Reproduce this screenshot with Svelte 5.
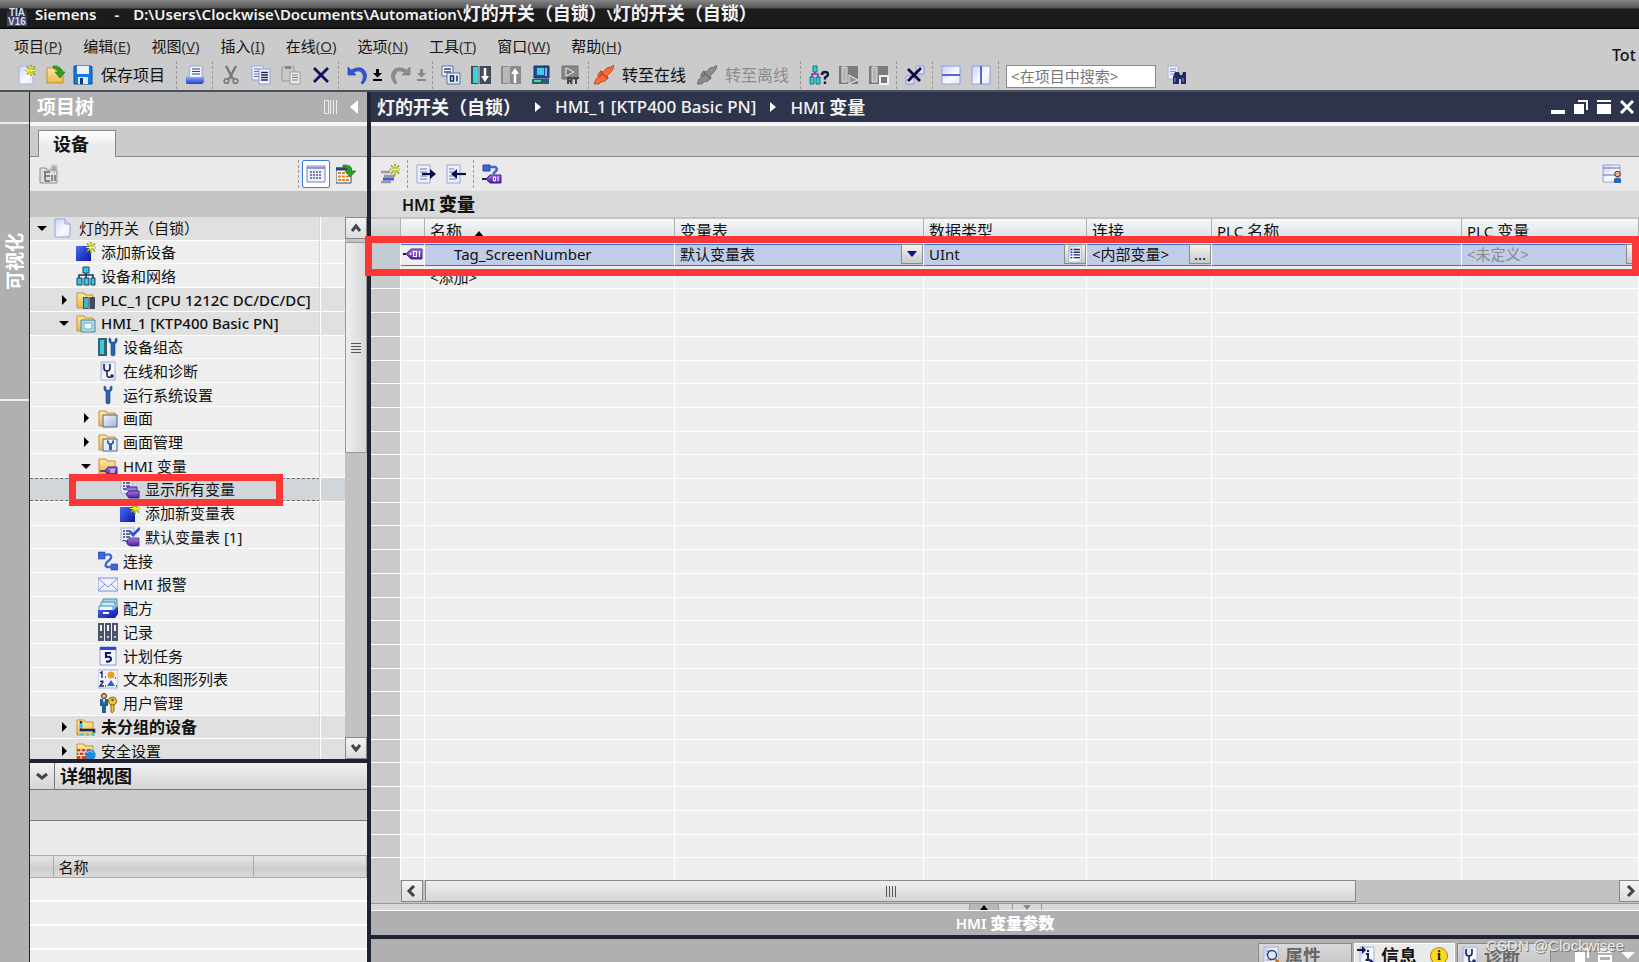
<script lang="ts">
  type TreeItem = {
    label: string;
    level: number;
    icon: string;
    arrow?: 'open' | 'closed';
    group?: boolean;
    weight?: 'semi' | 'bold';
    selected?: boolean;
  };

  const menus = [
    ['项目', 'P'],
    ['编辑', 'E'],
    ['视图', 'V'],
    ['插入', 'I'],
    ['在线', 'O'],
    ['选项', 'N'],
    ['工具', 'T'],
    ['窗口', 'W'],
    ['帮助', 'H'],
  ];

  const folder = '<path d="M1 3h7l1 2h8v13H1z" fill="url(#g-folder)" stroke="#c09030"/>';
  const page = '<path d="M3 1h14v18H3z" fill="url(#g-page)" stroke="#a9b1d8"/>';
  const spark = '<path d="M15 0v11M9.500 5.500h11M11 1.500l8 8M19 1.500l-8 8" stroke="#7a8a20" stroke-width="1.600"/><path d="M15 1v9M10.500 5.500h9M12 2.500l6 6M18 2.500l-6 6" stroke="#ffff30" stroke-width="1"/>';
  const tagShape = '<path d="M7 12l3-2h9v8h-9l-3-2z" fill="url(#g-tag)" stroke="#3a1a80" stroke-width=".7"/>';
  const wrench = '<path d="M6 1v4l2 2v11q2 2 4 0V7l2-2V1l-2 1v3H8V2z" fill="#2d63b0" stroke="#1d4584" stroke-width=".6"/>';
  const stetho = '<path d="M6 3v4q0 3 3 3t3-3V3M9 10v4q0 3 4 2" fill="none" stroke="#1c2550" stroke-width="1.600"/><circle cx="14" cy="15" r="1.700" fill="#1c2550"/>';
  const plug = (fill: string, line: string) =>
    `<path d="M0 19l2-5 2-1 0-4 3-3 2 1 4-4 4-1 3-2-1 4-2 3-4 4 1 2-3 3-4 1-2 2z" fill="${fill}" stroke="${line}" stroke-width=".8"/><path d="M6 6l8 8M5 12l3-3" stroke="${line}" stroke-width="1.400"/>`;

  const icons: Record<string, string> = {
    newProject: page + spark,
    openProject: folder + '<path d="M7 1q8-1 9 6h3l-5 6-5-6h3q-1-4-5-4z" fill="#2aa02a" stroke="#107010" stroke-width=".6"/>',
    save: '<path d="M1 1h17l1 1v17H1z" fill="#1478e0" stroke="#0b4a9a"/><path d="M4 1h12v8H4z" fill="#e8f2ff"/><path d="M5 12h10v7H5z" fill="#dfe8f4"/><path d="M7 13h3v6H7z" fill="#123a78"/>',
    print: '<path d="M5 1h12v12H4z" fill="#f2f5ff" stroke="#a0a8d0"/><path d="M7 4h8M7 6.500h8M7 9h8" stroke="#334070"/><path d="M1 12h18v5l-2 2H2l-1-1z" fill="url(#g-blue)"/>',
    cut: '<path d="M5 1l7 13M15 1L8 14" stroke="#777" stroke-width="2.400"/><circle cx="5.500" cy="16" r="2.300" fill="none" stroke="#777" stroke-width="1.600"/><circle cx="14.500" cy="16" r="2.300" fill="none" stroke="#777" stroke-width="1.600"/>',
    copy: '<path d="M1 1h11v14H1z" fill="#eef1ff" stroke="#99a2dc"/><path d="M3 4h6M3 6.500h6M3 9h6M3 11.500h6" stroke="#6070b0"/><path d="M8 4h11v15H8z" fill="#f4f6ff" stroke="#8c96d6"/><path d="M10 7.500h7M10 10h7M10 12.500h7M10 15h7" stroke="#20285c" stroke-width="1.300"/>',
    paste: '<path d="M1 2h12v14H1z" fill="#c9c9c9" stroke="#999"/><path d="M4 1h6v3H4z" fill="#888"/><path d="M9 7h10v12H9z" fill="#ececec" stroke="#999"/><path d="M11 10h6M11 12.500h6M11 15h6" stroke="#777"/>',
    remove: '<path d="M3 3l14 14M17 3L3 17" stroke="#101060" stroke-width="2.800"/>',
    undo: '<path d="M1 2v8h8L6.500 7.500Q12 4 15 8t-1 10l2 1q6-7 2-13T4 5z" fill="#3058d8" stroke="#2038a0" stroke-width=".6"/>',
    redo: '<path d="M19 2v8h-8l2.500-2.500Q8 4 5 8t1 10l-2 1q-6-7-2-13t14-1z" fill="#8e8e8e" stroke="#777" stroke-width=".6"/>',
    compile: '<path d="M1 1h11v10H1z" fill="#f2f5ff" stroke="#5f6fb0"/><path d="M3 4h7M3 7h7" stroke="#2c4070" stroke-width="1.500"/><path d="M6 8h13v11H6z" fill="#e4f0fa" stroke="#4a78a8"/><path d="M9.500 11h3v5h-3zM16 10.500v6" fill="none" stroke="#182858" stroke-width="1.500"/>',
    download: '<path d="M0 1h20v18H0z" fill="#3f4a5c"/><path d="M2 2h5v16H2z" fill="#2fd6dc"/><path d="M8 1v18" stroke="#e0e8f0"/><path d="M14 3v10" stroke="#fff" stroke-width="2.500"/><path d="M10 11h8l-4 6z" fill="#fff"/>',
    upload: '<path d="M0 1h20v18H0z" fill="#8a8a8a"/><path d="M2 2h5v16H2z" fill="#b8b8b8"/><path d="M8 1v18" stroke="#ddd"/><path d="M14 8v10" stroke="#fff" stroke-width="2.500"/><path d="M10 9h8l-4-6z" fill="#fff"/>',
    simulate: '<path d="M3 1h15v12H3z" fill="#1d4c9c" stroke="#12305f"/><path d="M6 3h7v7H6z" fill="#48c8e8"/><path d="M14 3h2v8h-2z" fill="#8fb0dc"/><path d="M1 14h17v5H1z" fill="#2b5a80"/><path d="M3 16h7" stroke="#50e070" stroke-width="2"/>',
    runtime: '<path d="M1 1h16v13H1z" fill="#888" stroke="#6e6e6e"/><path d="M5 3l8 4-8 4z" fill="#777" stroke="#eee"/><path d="M7 19v-6h3.500v3H7M9 16l2 3M12 13h6M15 13v6" fill="none" stroke="#444" stroke-width="2"/>',
    online: plug('#f4703a', '#c43a10'),
    offline: plug('#8c8c8c', '#666'),
    accessible: '<path d="M4 1h4v6H4zM1 12h4v7H1zM7 12h4v7H7z" fill="#25d0d0" stroke="#187878"/><path d="M6 7v2M3 12V9h6v3" fill="none" stroke="#8830c0" stroke-width="1.600"/><path d="M13 10q0-3 3-3t3 2.500q0 1.500-3 3v2M16 16.500v2.500" fill="none" stroke="#101848" stroke-width="2.400"/>',
    startCpu: '<path d="M0 1h19v18H0z" fill="#7b7b7b"/><path d="M3 2h5v15H3z" fill="#b4b4b4" stroke="#ddd"/><path d="M10 10l9 5-9 4z" fill="#999" stroke="#eee"/>',
    stopCpu: '<path d="M0 1h19v18H0z" fill="#7b7b7b"/><path d="M3 2h5v15H3z" fill="#b4b4b4" stroke="#ddd"/><path d="M11 11h8v8h-8z" fill="#777" stroke="#f2f2f2" stroke-width="2"/>',
    crossRef: '<path d="M11 1h8v8h-8zM1 11h8v8H1z" fill="#dde3ff" stroke="#8a94d4"/><path d="M3 4l12 12M16 3L3 16" stroke="#08083c" stroke-width="2.800"/>',
    splitH: '<path d="M1 1h18v18H1z" fill="url(#g-page)" stroke="#8f9ce0"/><path d="M1 10h18" stroke="#5466d8" stroke-width="2"/>',
    splitV: '<path d="M1 1h18v18H1z" fill="url(#g-page)" stroke="#8f9ce0"/><path d="M10 1v18" stroke="#5466d8" stroke-width="2"/>',
    find: '<path d="M1 1h10v13H1z" fill="#eef1ff" stroke="#a3acd8"/><path d="M3 4h6M3 6.500h6M3 9h6" stroke="#8090c0"/><path d="M8 7h4l1 3h2l1-3h3v12h-5v-5h-2v5H6v-7z" fill="#1d2c66"/><path d="M8 13v4M16 13v4" stroke="#7c90d0"/>',
    addFolder: '<path d="M1 4h6l1 2h10v13H1z" fill="#dcdcdc" stroke="#909090"/><path d="M5 8h6M6 8v9M6 12h5M6 17h5M13 11v6M16 11v6" fill="none" stroke="#666" stroke-width="1.400"/><path d="M15 0v8M11 4h8M12 1l6 6M18 1l-6 6" stroke="#999"/>',
    listView: '<path d="M1 2h18v16H1z" fill="#eef1ff" stroke="#7782bc"/><path d="M1 4h18" stroke="#8f99cc" stroke-width="2"/><path d="M4 8h12M4 11h12M4 14h12" stroke="#505a78" stroke-width="1.500" stroke-dasharray="2 1"/>',
    overview: '<path d="M0 4h15v15H0z" fill="#fff" stroke="#26457a"/><path d="M0 5h15" stroke="#26457a" stroke-width="3"/><path d="M2 9h11M2 12.500h11M2 16h11" stroke="#e08020" stroke-width="2" stroke-dasharray="3 1"/><path d="M7 1q9-1 9 6h4l-6 6-5-6h3q-1-4-5-4z" fill="#2aa02a" stroke="#107010" stroke-width=".6"/>',
    newTag: '<path d="M1 8h9M4 12h11M1 18h10" stroke="#9a9a9a" stroke-width="2.500"/><path d="M3 15h11" stroke="#3a60e0" stroke-width="3"/>' + spark,
    exportTags: '<path d="M1 1h13v18H1z" fill="#eef1ff" stroke="#98a2dc"/><path d="M4 5h7M4 8h7M4 12h7M4 15h7" stroke="#6878a0"/><path d="M6 10h9" stroke="#0c1048" stroke-width="2.200"/><path d="M14 5l6 5-6 5z" fill="#0c1048"/>',
    importTags: '<path d="M1 1h13v18H1z" fill="#eef1ff" stroke="#98a2dc"/><path d="M3 5h5M3 8h4M3 12h4M3 15h7" stroke="#6878a0"/><path d="M10 10h10" stroke="#0c1048" stroke-width="2.200"/><path d="M11 5l-6 5 6 5z" fill="#0c1048"/>',
    linkTag: '<path d="M1 1h7v6H1z" fill="#3f67dd" stroke="#2444a0"/><path d="M8 3h5q3 1 1 4l-3 3" fill="none" stroke="#3f67dd" stroke-width="2.500"/><path d="M0 15h8" stroke="#2b1560" stroke-width="2"/><path d="M4 15l4-4h11v8H8z" fill="url(#g-tag)" stroke="#3a1a80"/><path d="M11.500 13h2v4h-2zM16 12.500v5" fill="none" stroke="#fff"/>',
    userView: '<path d="M1 1h17v17H1z" fill="url(#g-page)" stroke="#95a0d0"/><path d="M1 4h17M1 11h17" stroke="#6070a8"/><path d="M12 19v-4q3-3 7 0v4z" fill="#2468b0"/><circle cx="15.500" cy="10" r="2.800" fill="#e8b880" stroke="#40301c"/>',
    project: '<path d="M1 1h10l5 5v13H1z" fill="url(#g-page)" stroke="#98a2dc"/><path d="M11 1v5h5" fill="#cdd6fb" stroke="#98a2dc"/>',
    addDevice: '<path d="M0 4h15v15H0z" fill="url(#g-deep)"/>' + spark,
    network: '<path d="M7 1h6v6H7zM1 12h5v7H1zM8 12h5v7H8zM15 12h4v7h-4z" fill="#34c8d8" stroke="#1b3f68"/><path d="M10 7v5M3 12V9h14v3" fill="none" stroke="#1b3060" stroke-width="1.500"/>',
    plc: folder + '<path d="M7 7h12v12H7z" fill="#414b5a"/><path d="M8 8h4v10H8z" fill="#35b8c8"/><path d="M13 7v12" stroke="#aab4c0"/>',
    hmi: folder + '<path d="M5 7h14v12H5z" fill="#b8d8ea" stroke="#3f86a0"/><path d="M8 10h8v6H8z" fill="#e8f8ff" stroke="#62b6cc"/>',
    config: '<path d="M0 1h9v18H0z" fill="#3e6070"/><path d="M2 3h4v14H2z" fill="#34cfd4"/><g transform="translate(5 0)">' + wrench + '</g>',
    diag: page + stetho,
    settings: wrench,
    screens: folder + '<path d="M5 7h14v12H5z" fill="url(#g-screen)" stroke="#4e6488"/>',
    screenAdmin: folder + '<path d="M5 7h14v12H5z" fill="#e6eefb" stroke="#4e6488"/><path d="M9 8v3l2 2v5h3v-5l2-2V8l-2 1v2h-3V9z" fill="#2d63b0"/>',
    tags: folder + '<path d="M2 15h5l3-4h9v8h-9l-3-4z" fill="url(#g-tag)" stroke="#3a1a80"/><path d="M12 14h5M12 16h5" stroke="#fff"/>',
    allTags: '<path d="M1 1h11v13H1z" fill="#eef1ff" stroke="#a8b0dc"/><path d="M3 4h2M3 7h2M3 10h2M6 4h4M6 7h4" stroke="#303c78" stroke-width="1.500"/><path d="M4 11l4-3h9v6h-4" fill="#9a74dc" stroke="#4a2a90"/><path d="M6 15l3-3h10v7H9z" fill="url(#g-tag)" stroke="#3a1a80"/>',
    defaultTags: '<path d="M1 1h13v13H1z" fill="#eef1ff" stroke="#a8b0dc"/><path d="M3 4h2M3 7h2M3 10h2M6 4h4M6 7h4M6 10h4" stroke="#303c78" stroke-width="1.500"/><path d="M10 4l3 4 7-7" fill="none" stroke="#2c50c0" stroke-width="2.500"/>' + '<g transform="translate(0 1)">' + tagShape + '</g><path d="M3 13l5 2" stroke="#3a1a80"/>',
    connections: '<path d="M0 1h7v7H0zM13 13h7v6h-7z" fill="#3f67dd" stroke="#2444a0" stroke-width=".6"/><path d="M7 4q7-2 6 3-1 2-4 4-3 4 0 5h5" fill="none" stroke="#3f67dd" stroke-width="2.400"/>',
    mail: '<path d="M0 4h20v13H0z" fill="#eef2ff" stroke="#7d92d8"/><path d="M1 5l9 8 9-8M1 16l6-6M19 16l-6-6" fill="none" stroke="#7d92d8"/>',
    recipes: '<path d="M5 1h14v11H5z" fill="#9fd8ee" stroke="#4890b0"/><path d="M3 4h14v9H3z" fill="#c5ecf8" stroke="#4890b0"/><path d="M1 8h14v5H1z" fill="#e8faff" stroke="#4890b0"/><path d="M0 12h16l4-4v8l-3 4H0z" fill="url(#g-deep)"/><path d="M5 14h6v2H5z" fill="#fff"/>',
    logs: '<path d="M0 1h6v18H0zM7 1h6v18H7zM14 1h6v18h-6z" fill="#4c5468"/><path d="M2 3h2v6H2zM9 3h2v6H9zM16 3h2v6h-2z" fill="#f2f4f8"/><path d="M2 15h2M9 15h2M16 15h2" stroke="#c8d0e0" stroke-width="2"/>',
    tasks: '<path d="M2 1h16v18H2z" fill="#f4f6ff" stroke="#8f9ce0"/><path d="M2 1h16v3H2z" fill="#2c48d8"/><path d="M13 7H8v4q5-1 5 2t-5 2.500" fill="none" stroke="#141c54" stroke-width="2.200"/>',
    lists: '<path d="M0 1h20v18H0z" fill="#f2f4ff" stroke="#a8b0dc"/><path d="M2 4l2-1v6M2 13q3-2 3 0l-3 4h4" fill="none" stroke="#20285c" stroke-width="1.400"/><circle cx="13" cy="6" r="3.500" fill="#f0a020"/><path d="M13 11l4 6H9z" fill="#2c60d0"/><path d="M7 8h1M7 17h1M17 9h1M18 17h1" stroke="#20285c" stroke-width="1.500"/>',
    users: '<circle cx="6" cy="3" r="2.500" fill="#e8b880" stroke="#302818"/><path d="M2 6h8v7H8v7H4v-7H2z" fill="#236098"/><path d="M5 6l1 5 1-5z" fill="#fff"/><circle cx="14.500" cy="8" r="4" fill="#e8c848" stroke="#8c6c10"/><path d="M13 12h3v6l-2 2-1-2z" fill="#e8c848" stroke="#8c6c10"/><circle cx="14.500" cy="7" r="1.200" fill="#705008"/>',
    ungrouped: folder + '<path d="M5 4v9h13v4" fill="none" stroke="#1c2c50" stroke-width="2.500"/><path d="M3 7h4v4H3zM4 16h4v3H4zM10 16h3v3h-3zM15 16h4v3h-4z" fill="#34b8c8" stroke="#fff" stroke-width=".5"/>',
    security: folder + '<path d="M1 8h14v10H1z" fill="#d04028"/><path d="M1 11h14M1 14.500h14M5 8v3M10 8v3M3 11v3M8 11v3M5 15v3" stroke="#fff"/><circle cx="14.500" cy="14" r="5.200" fill="#1f8ad8"/><path d="M11 12q4-4 6 0" stroke="#8fd4f8" fill="none"/>',
    tag: '<path d="M0 10h8" stroke="#2b1560" stroke-width="2"/><path d="M3 10l5-5h11v10H8z" fill="url(#g-tag)" stroke="#4a2a90"/><circle cx="7.500" cy="10" r="1" fill="#fff"/><path d="M10.500 7.500h3v5h-3zM16.500 7v6" fill="none" stroke="#fff" stroke-width="1.200"/>',
    properties: page + '<path d="M5 5h9M5 8h9M5 14h6" stroke="#7884b0"/><circle cx="11" cy="9" r="4.500" fill="#dbe8fa" stroke="#384878" stroke-width="1.500"/><path d="M14 13l5 5" stroke="#c07820" stroke-width="2.500"/>',
    info: page + '<path d="M0 4h6" stroke="#101060" stroke-width="2"/><path d="M5 0l4 4-4 4zM14 13l-3 6h8z" fill="#101060"/><path d="M11 4v2M9 8h2v6M8.500 14h5" fill="none" stroke="#182060" stroke-width="2"/>',
    list: page + '<path d="M5 5h2M5 8h2M5 11h2M5 14h2M8.500 5h7M8.500 8h7M8.500 11h7M8.500 14h7" stroke="#242c68" stroke-width="1.500"/>',
  };

  const editTools = ['cut', 'copy', 'paste', 'remove'];
  const deviceTools = ['compile', 'download', 'upload', 'simulate', 'runtime'];
  const cpuTools = ['accessible', 'startCpu', 'stopCpu'];

  const tree: TreeItem[] = [
    { label: '灯的开关（自锁）', level: 0, icon: 'project', arrow: 'open', group: true },
    { label: '添加新设备', level: 1, icon: 'addDevice' },
    { label: '设备和网络', level: 1, icon: 'network' },
    { label: 'PLC_1 [CPU 1212C DC/DC/DC]', level: 1, icon: 'plc', arrow: 'closed', group: true, weight: 'semi' },
    { label: 'HMI_1 [KTP400 Basic PN]', level: 1, icon: 'hmi', arrow: 'open', group: true, weight: 'semi' },
    { label: '设备组态', level: 2, icon: 'config' },
    { label: '在线和诊断', level: 2, icon: 'diag' },
    { label: '运行系统设置', level: 2, icon: 'settings' },
    { label: '画面', level: 2, icon: 'screens', arrow: 'closed' },
    { label: '画面管理', level: 2, icon: 'screenAdmin', arrow: 'closed' },
    { label: 'HMI 变量', level: 2, icon: 'tags', arrow: 'open' },
    { label: '显示所有变量', level: 3, icon: 'allTags', selected: true },
    { label: '添加新变量表', level: 3, icon: 'addDevice' },
    { label: '默认变量表 [1]', level: 3, icon: 'defaultTags' },
    { label: '连接', level: 2, icon: 'connections' },
    { label: 'HMI 报警', level: 2, icon: 'mail' },
    { label: '配方', level: 2, icon: 'recipes' },
    { label: '记录', level: 2, icon: 'logs' },
    { label: '计划任务', level: 2, icon: 'tasks' },
    { label: '文本和图形列表', level: 2, icon: 'lists' },
    { label: '用户管理', level: 2, icon: 'users' },
    { label: '未分组的设备', level: 1, icon: 'ungrouped', arrow: 'closed', group: true, weight: 'bold' },
    { label: '安全设置', level: 1, icon: 'security', arrow: 'closed', group: true },
  ];

  const emptyRows = Array.from({ length: 25 }, (_, i) => i);

  let selected = $state(tree.findIndex((t) => t.selected));
  let search = $state('');
  let tagTable = $state('默认变量表');
</script>

{#snippet icon(name: string)}
  <svg class="icon" viewBox="0 0 20 20" aria-hidden="true">{@html icons[name]}</svg>
{/snippet}

{#snippet tool(name: string)}
  <button class="tool" aria-label={name}>{@render icon(name)}</button>
{/snippet}

{#snippet chevron(d: string)}
  <svg class="chev" viewBox="0 0 12 12" aria-hidden="true"><path {d} /></svg>
{/snippet}

<svg class="defs" aria-hidden="true">
  <defs>
    <linearGradient id="g-folder" x2="0" y2="1"><stop stop-color="#ffe9a0" /><stop offset="1" stop-color="#e9b850" /></linearGradient>
    <linearGradient id="g-page" x2="1" y2="1"><stop stop-color="#c8d2ff" /><stop offset=".6" stop-color="#fbfcff" /><stop offset="1" stop-color="#dfe4ff" /></linearGradient>
    <linearGradient id="g-blue" x2="0" y2="1"><stop stop-color="#8aa4ff" /><stop offset="1" stop-color="#2040d0" /></linearGradient>
    <linearGradient id="g-deep" x2="1" y2="1"><stop stop-color="#4a6cf0" /><stop offset="1" stop-color="#0a18a8" /></linearGradient>
    <linearGradient id="g-tag" x2="0" y2="1"><stop stop-color="#a878e8" /><stop offset="1" stop-color="#4a1e9c" /></linearGradient>
    <linearGradient id="g-screen" x2="1" y2="1"><stop stop-color="#f4f8ff" /><stop offset="1" stop-color="#9fb4d8" /></linearGradient>
  </defs>
</svg>

<div class="app">
  <header class="titlebar">
    <span class="logo"><span>TIA</span><span>V16</span></span>
    <span class="brand">Siemens</span>
    <span class="dash">-</span>
    <span class="path">D:\Users\Clockwise\Documents\Automation\<b>灯的开关（自锁）</b>\<b>灯的开关（自锁）</b></span>
  </header>

  <div class="topbar">
    <div class="bars">
      <nav class="menu">
        {#each menus as [label, key]}
          <button>{label}<span>(<u>{key}</u>)</span></button>
        {/each}
      </nav>
      <div class="toolbar">
        {@render tool('newProject')}
        {@render tool('openProject')}
        <button class="labelled">{@render icon('save')}保存项目</button>
        <i class="sep"></i>
        {@render tool('print')}
        <i class="sep"></i>
        {#each editTools as name}{@render tool(name)}{/each}
        <i class="sep"></i>
        {@render tool('undo')}
        <button class="more" aria-label="undo list"><svg viewBox="0 0 10 14"><path d="M4 1h3v4h3L5.500 9.500 1 5h3zM1 11h9v2H1z" /></svg></button>
        {@render tool('redo')}
        <button class="more off" aria-label="redo list"><svg viewBox="0 0 10 14"><path d="M4 1h3v4h3L5.500 9.500 1 5h3zM1 11h9v2H1z" /></svg></button>
        <i class="sep"></i>
        {#each deviceTools as name}{@render tool(name)}{/each}
        <i class="sep"></i>
        <button class="labelled">{@render icon('online')}转至在线</button>
        <button class="labelled" disabled>{@render icon('offline')}转至离线</button>
        <i class="sep"></i>
        {#each cpuTools as name}{@render tool(name)}{/each}
        <i class="sep"></i>
        {@render tool('crossRef')}
        <i class="sep"></i>
        {@render tool('splitH')}
        {@render tool('splitV')}
        <i class="sep"></i>
        <input class="search" type="text" aria-label="search" placeholder="<在项目中搜索>" bind:value={search} />
        {@render tool('find')}
      </div>
    </div>
    <div class="slogan">Tot</div>
  </div>

  <main class="workspace">
    <aside class="strip">
      <div class="strip-head"></div>
      <button class="strip-tab"><span>可视化</span></button>
    </aside>

    <section class="project">
      <div class="panel-head">
        <h2>项目树</h2>
        <svg class="pin" viewBox="0 0 14 14"><path d="M.5.500h4v13h-4zM6.500 0v14M9.500 0v14M12.500 0v14" /></svg>
        <button class="collapse" aria-label="collapse"><svg viewBox="0 0 8 14"><path d="M8 0v14L0 7z" /></svg></button>
      </div>
      <div class="tabs"><button class="tab">设备</button></div>
      <div class="panel-tools">
        {@render tool('addFolder')}
        <span class="grow"></span>
        <i class="sep"></i>
        <button class="tool active" aria-label="listView">{@render icon('listView')}</button>
        {@render tool('overview')}
      </div>
      <div class="band"></div>

      <div class="tree-area">
        <div class="tree-clip">
          <div class="tree" role="tree">
            {#each tree as item, i}
              <div
                class="node"
                class:group={item.group}
                class:selected={selected === i}
                class:semi={item.weight === 'semi'}
                class:bold={item.weight === 'bold'}
                role="treeitem"
                aria-selected={selected === i}
                tabindex="-1"
                onclick={() => (selected = i)}
                onkeydown={(e) => e.key === 'Enter' && (selected = i)}
              >
                <div class="node-main" style="padding-left: {4 + item.level * 22}px">
                  <span class="twist">
                    {#if item.arrow === 'open'}
                      <svg viewBox="0 0 10 10"><path d="M0 3h10L5 8z" /></svg>
                    {:else if item.arrow === 'closed'}
                      <svg viewBox="0 0 10 10"><path d="M3 0v10l5-5z" /></svg>
                    {/if}
                  </span>
                  {@render icon(item.icon)}
                  <span class="node-label">{item.label}</span>
                </div>
                <div class="node-state"></div>
                {#if item.selected}<div class="mark mark-tree"></div>{/if}
              </div>
            {/each}
          </div>
        </div>
        <div class="vscroll">
          <button aria-label="scroll up">{@render chevron('M2 9l4-5 4 5')}</button>
          <div class="vthumb"><i></i><i></i><i></i><i></i></div>
          <span class="grow"></span>
          <button aria-label="scroll down">{@render chevron('M2 3l4 5 4-5')}</button>
        </div>
      </div>

      <div class="detail">
        <div class="detail-head">
          <button aria-label="toggle">{@render chevron('M1 4l5 4 5-4')}</button>
          <h2>详细视图</h2>
        </div>
        <div class="detail-band"></div>
        <div class="detail-tools"></div>
        <table class="detail-table">
          <colgroup><col class="d-mark" /><col class="d-name" /><col /></colgroup>
          <thead><tr><th></th><th>名称</th><th></th></tr></thead>
          <tbody>
            {#each [0, 1, 2, 3] as n (n)}<tr><td colspan="3"></td></tr>{/each}
          </tbody>
        </table>
      </div>
    </section>

    <section class="editor">
      <div class="editor-head">
        <b>灯的开关（自锁）</b>
        <svg class="crumb" viewBox="0 0 6 10"><path d="M0 0l6 5-6 5z" /></svg>
        <span>HMI_1 [KTP400 Basic PN]</span>
        <svg class="crumb" viewBox="0 0 6 10"><path d="M0 0l6 5-6 5z" /></svg>
        <span>HMI <b>变量</b></span>
        <span class="grow"></span>
        <div class="window-buttons">
          <button aria-label="minimize"><svg viewBox="0 0 14 14"><path d="M0 10h14v4H0z" /></svg></button>
          <button aria-label="restore"><svg viewBox="0 0 14 14"><path d="M0 4h10v10H0zM4 0h10v10h-2V2H4z" /></svg></button>
          <button aria-label="maximize"><svg viewBox="0 0 14 14"><path d="M0 0h14v2H0zM0 4h14v10H0z" /></svg></button>
          <button aria-label="close"><svg viewBox="0 0 14 14"><path class="x" d="M1 1l12 12M13 1L1 13" /></svg></button>
        </div>
      </div>
      <div class="tabs"></div>
      <div class="panel-tools editor-tools">
        {@render tool('newTag')}
        <i class="sep"></i>
        {@render tool('exportTags')}
        {@render tool('importTags')}
        <i class="sep"></i>
        {@render tool('linkTag')}
        <span class="grow"></span>
        {@render tool('userView')}
      </div>
      <h1 class="caption">HMI <b>变量</b></h1>

      <div class="grid-area">
        <div class="grid-clip">
          <table class="grid">
            <colgroup>
              <col class="c-gutter" /><col class="c-icon" /><col class="c-name" /><col class="c-table" />
              <col class="c-type" /><col class="c-conn" /><col class="c-plc" /><col />
            </colgroup>
            <thead>
              <tr>
                <th></th>
                <th></th>
                <th>名称<svg class="sort" viewBox="0 0 10 6"><path d="M0 6l5-6 5 6z" /></svg></th>
                <th>变量表</th>
                <th>数据类型</th>
                <th>连接</th>
                <th><small>PLC</small> 名称</th>
                <th><small>PLC</small> 变量</th>
              </tr>
            </thead>
            <tbody>
              <tr class="current">
                <td></td>
                <td class="tag-cell">{@render icon('tag')}</td>
                <td class="tag-name">Tag_ScreenNumber</td>
                <td>
                  <div class="cell">
                    <select aria-label="变量表" bind:value={tagTable}><option>默认变量表</option></select>
                    <span class="cell-btn"><svg viewBox="0 0 10 10"><path d="M0 2h10L5 8z" /></svg></span>
                  </div>
                </td>
                <td><div class="cell">UInt<button class="cell-btn" aria-label="type list">{@render icon('list')}</button></div></td>
                <td><div class="cell">&lt;内部变量&gt;<button class="cell-btn dots">...</button></div></td>
                <td></td>
                <td class="undef"><div class="cell">&lt;未定义&gt;<button class="cell-btn edge" aria-label="tag list"></button></div></td>
              </tr>
              <tr>
                <td></td><td></td><td>&lt;添加&gt;</td><td></td><td></td><td></td><td></td><td></td>
              </tr>
              {#each emptyRows as n (n)}
                <tr><td></td><td></td><td></td><td></td><td></td><td></td><td></td><td></td></tr>
              {/each}
            </tbody>
          </table>
        </div>
        <div class="mark mark-row"></div>
      </div>

      <div class="hscroll">
        <button aria-label="scroll left">{@render chevron('M8 1L3 6l5 5')}</button>
        <div class="track"><div class="hthumb"><i></i><i></i><i></i><i></i></div></div>
        <button class="right" aria-label="scroll right">{@render chevron('M4 1l5 5-5 5')}</button>
      </div>
      <div class="splitter">
        <button class="up" aria-label="expand"><svg viewBox="0 0 8 5"><path d="M0 5l4-5 4 5z" /></svg></button>
        <button aria-label="fold"><svg viewBox="0 0 8 5"><path d="M0 0h8L4 5z" /></svg></button>
      </div>
      <div class="params">HMI <b>变量参数</b></div>
      <div class="inspector">
        <button class="itab">{@render icon('properties')}属性</button>
        <button class="itab on">{@render icon('info')}信息<span class="badge">i</span></button>
        <button class="itab">{@render icon('diag')}诊断</button>
        <div class="inspector-icons">
          <svg viewBox="0 0 14 14"><path d="M0 4h10v10H0zM4 0h10v10h-2V2H4z" /></svg>
          <svg viewBox="0 0 14 14"><path d="M0 0h14v5H0zM0 7h14v7H0zM2 9v3h10V9zM2 2v1h10V2z" fill-rule="evenodd" /></svg>
          <svg viewBox="0 0 14 14"><path d="M0 4h14l-7 7z" /></svg>
        </div>
        <span class="watermark">CSDN @Clockwisee</span>
      </div>
    </section>
  </main>
</div>

<style>
  :global(body) {
    margin: 0;
  }

  .app {
    height: 100vh;
    display: flex;
    flex-direction: column;
    overflow: hidden;
    background: #b0b0b0;
    color: #111;
    font: 15px/20px "Noto Sans", "Noto Sans CJK SC", sans-serif;
  }

  .app :is(button, input, select) {
    margin: 0;
    padding: 0;
    border: 0;
    border-radius: 0;
    background: none;
    color: inherit;
    font: inherit;
    flex-shrink: 0;
  }

  h1,
  h2 {
    margin: 0;
    font-size: 18px;
    font-weight: 700;
  }

  .defs {
    position: absolute;
    width: 0;
    height: 0;
  }

  .icon {
    width: 20px;
    height: 20px;
    flex-shrink: 0;
    display: block;
    fill: none;
  }

  .grow {
    flex: 1;
  }

  /* title bar */
  .titlebar {
    height: 29px;
    flex-shrink: 0;
    box-sizing: border-box;
    display: flex;
    align-items: center;
    padding: 0 0 2px 7px;
    background: linear-gradient(#858585, #555 8px, #1c1c1c 9px, #1c1c1c 27px, #000);
    color: #f2f2f2;
    font-weight: 600;
    white-space: nowrap;
  }

  .logo {
    width: 20px;
    height: 18px;
    margin: 6px 8px 0 0;
    display: flex;
    flex-direction: column;
    align-items: center;
    background: linear-gradient(#20242c, #46507a);
    color: #d8dcf0;
    font: 700 10px/9px "Liberation Sans", sans-serif;
  }

  .brand {
    margin-right: 18px;
  }

  .dash {
    margin-right: 14px;
  }

  .path b {
    font-size: 18px;
    font-weight: 700;
  }

  /* menu and main toolbar */
  .topbar {
    height: 63px;
    flex-shrink: 0;
    box-sizing: border-box;
    display: flex;
    background: #cbcbcb;
    border-bottom: 2px solid #4b5060;
  }

  .bars {
    flex: 1;
    min-width: 0;
  }

  .menu {
    height: 33px;
    display: flex;
    align-items: center;
    gap: 21px;
    padding-left: 14px;
  }

  .menu span {
    color: #333;
  }

  .toolbar {
    height: 26px;
    display: flex;
    align-items: center;
    padding-left: 11px;
    font-size: 16px;
  }

  .tool {
    width: 30px;
    height: 28px;
    display: grid;
    place-items: center;
  }

  .sep {
    height: 28px;
    flex-shrink: 0;
    margin: 0 3px 0 2px;
    border-left: 1px dashed #999;
  }

  .app .labelled {
    display: flex;
    align-items: center;
    gap: 8px;
    padding: 0 9px 0 2px;
  }

  .app .labelled:disabled {
    color: #8c8c8c;
  }

  .more {
    width: 14px;
    height: 20px;
    display: flex;
    align-items: center;
  }

  .more svg {
    width: 10px;
    height: 14px;
  }

  .more.off svg {
    fill: #888;
  }

  .app .search {
    width: 150px;
    height: 23px;
    box-sizing: border-box;
    margin: 2px 6px 0 4px;
    padding: 0 4px;
    border: 1px solid #888;
    background: #fff;
    font-size: 15px;
  }

  .search::placeholder {
    color: #777;
    opacity: 1;
  }

  .slogan {
    width: 27px;
    padding-top: 16px;
    font-size: 16px;
    font-weight: 500;
  }

  /* workspace */
  .workspace {
    flex: 1;
    min-height: 0;
    display: flex;
  }

  .strip {
    width: 29px;
    flex-shrink: 0;
    display: flex;
    flex-direction: column;
    border-right: 1px solid #1f2434;
  }

  .strip-head {
    height: 30px;
    border-bottom: 2px solid #eee;
  }

  .app .strip-tab {
    height: 277px;
    border-bottom: 2px solid #eee;
    display: flex;
    align-items: center;
    justify-content: center;
    color: #fff;
    font-size: 19px;
    font-weight: 700;
  }

  .strip-tab span {
    writing-mode: vertical-rl;
    text-orientation: sideways;
    transform: rotate(180deg);
  }

  .project {
    width: 337px;
    flex-shrink: 0;
    display: flex;
    flex-direction: column;
    border-right: 4px solid #1f2434;
  }

  .panel-head {
    height: 30px;
    flex-shrink: 0;
    display: flex;
    align-items: center;
    padding: 0 9px 0 7px;
    background: #b0b0b0;
    color: #fff;
  }

  .panel-head h2 {
    flex: 1;
    font-size: 19px;
  }

  .pin {
    width: 14px;
    height: 14px;
    margin-right: 12px;
    fill: none;
    stroke: #eee;
  }

  .collapse svg {
    display: block;
    width: 8px;
    height: 14px;
    fill: #fff;
  }

  .tabs {
    height: 35px;
    flex-shrink: 0;
    box-sizing: border-box;
    display: flex;
    align-items: flex-end;
    padding-left: 8px;
    border-top: 4px solid #f4f4f6;
    border-bottom: 1px solid #888;
    background: #cbcbcb;
  }

  .app .tab {
    width: 78px;
    height: 27px;
    margin-bottom: -1px;
    padding-right: 12px;
    border: 1px solid #888;
    border-bottom: 0;
    background: linear-gradient(#fff, #eaeaea 60%);
    font-size: 18px;
    font-weight: 700;
  }

  .panel-tools {
    height: 34px;
    flex-shrink: 0;
    display: flex;
    align-items: center;
    padding: 0 6px 0 4px;
    background: #eaeaea;
  }

  .editor-tools {
    padding-right: 12px;
  }

  .app .tool.active {
    width: 28px;
    box-sizing: border-box;
    margin-right: 1px;
    border: 1px solid #3f78d8;
    border-radius: 2px;
    background: #fff;
  }

  .band {
    height: 26px;
    flex-shrink: 0;
    background: #c4c4c4;
  }

  /* project tree */
  .tree-area {
    flex: 1;
    min-height: 0;
    display: flex;
  }

  .tree-clip {
    flex: 1;
    overflow: hidden;
  }

  .tree {
    height: calc(100% + 4px);
    display: grid;
    grid-auto-rows: 1fr;
  }

  .node {
    position: relative;
    min-height: 0;
    display: flex;
    box-sizing: border-box;
    border-bottom: 1px solid #fff;
    background: #efefef;
    white-space: nowrap;
    cursor: default;
  }

  .node.group {
    background: #e0e0e0;
  }

  .node.selected {
    background: #d0d6da;
  }

  .node-main {
    flex: 1;
    display: flex;
    align-items: center;
    border: 1px solid transparent;
    border-left: 0;
  }

  .selected .node-main {
    border: 1px dashed #666;
    border-left: 0;
  }

  .node-state {
    width: 24px;
    border-left: 1px solid #fff;
    box-shadow: -1px 0 #d4d4d4;
  }

  .twist {
    width: 16px;
    margin-right: 4px;
    display: flex;
    justify-content: center;
  }

  .twist svg {
    width: 10px;
    height: 10px;
  }

  .node-label {
    margin-left: 5px;
  }

  .semi {
    font-weight: 500;
  }

  .bold {
    font-size: 16px;
    font-weight: 700;
  }

  .mark {
    position: absolute;
    box-sizing: border-box;
    border: 7px solid #fc3737;
    pointer-events: none;
    z-index: 2;
  }

  .mark-tree {
    left: 39px;
    top: -4px;
    width: 214px;
    height: 32px;
  }

  .mark-row {
    left: -6px;
    right: 0;
    top: 19px;
    height: 40px;
  }

  .vscroll {
    width: 22px;
    display: flex;
    flex-direction: column;
    background: #c2c2c2;
  }

  .vscroll button,
  .hscroll button {
    width: 22px;
    height: 22px;
    box-sizing: border-box;
    border: 1px solid #888;
    background: linear-gradient(#f4f4f4, #dcdcdc);
    display: grid;
    place-items: center;
  }

  .chev {
    width: 12px;
    height: 12px;
    fill: none;
    stroke: #444;
    stroke-width: 3;
  }

  .vthumb {
    height: 39%;
    margin-top: 3px;
    box-sizing: border-box;
    border: 1px solid #999;
    background: linear-gradient(90deg, #eee, #d8d8d8);
    display: flex;
    flex-direction: column;
    align-items: center;
    justify-content: center;
    gap: 2px;
  }

  .vthumb i {
    width: 10px;
    height: 1px;
    background: #555;
  }

  /* detail view */
  .detail {
    height: 199px;
    flex-shrink: 0;
    border-top: 4px solid #1f2434;
    background: #eaeaea;
    overflow: hidden;
  }

  .detail-head {
    height: 26px;
    display: flex;
    align-items: center;
    border-bottom: 1px solid #777;
    background: linear-gradient(#f0f0f0, #d4d4d4);
  }

  .app .detail-head button {
    width: 25px;
    height: 26px;
    border-right: 1px solid #777;
    display: grid;
    place-items: center;
  }

  .detail-head h2 {
    padding-left: 5px;
  }

  .detail-band {
    height: 30px;
    border-bottom: 1px solid #777;
    background: #cbcbcb;
  }

  .detail-tools {
    height: 34px;
  }

  .detail-table {
    width: 100%;
    table-layout: fixed;
    border-collapse: collapse;
    background: #efefef;
  }

  .d-mark {
    width: 23px;
  }

  .d-name {
    width: 200px;
  }

  .detail-table th {
    height: 21px;
    padding: 0 5px;
    border: 1px solid #aaa;
    border-left: 0;
    background: linear-gradient(#e6e6e6, #cecece 55%, #dadada);
    font-weight: 400;
    text-align: left;
  }

  .detail-table td {
    height: 22px;
    padding: 0;
    border-bottom: 2px solid #fff;
  }

  /* tag editor */
  .editor {
    flex: 1;
    min-width: 0;
    display: flex;
    flex-direction: column;
  }

  .editor-head {
    height: 30px;
    flex-shrink: 0;
    display: flex;
    align-items: center;
    gap: 14px;
    padding: 0 5px 0 6px;
    background: #2d344b;
    color: #f4f4f4;
    font-size: 17px;
    font-weight: 500;
    white-space: nowrap;
  }

  .editor-head b {
    font-size: 18px;
  }

  .crumb {
    width: 6px;
    height: 10px;
    fill: #fff;
  }

  .window-buttons {
    display: flex;
    gap: 9px;
    fill: #fff;
  }

  .window-buttons svg,
  .inspector-icons svg {
    display: block;
    width: 14px;
    height: 14px;
  }

  .x {
    stroke: #fff;
    stroke-width: 3;
  }

  .caption {
    height: 26px;
    flex-shrink: 0;
    padding-left: 31px;
    background: #d9d9d9;
    font-size: 16px;
    line-height: 26px;
    font-weight: 600;
  }

  .caption b {
    font-size: 18px;
  }

  .grid-area {
    flex: 1;
    min-height: 0;
    position: relative;
  }

  .grid-clip {
    height: 100%;
    overflow: hidden;
  }

  .grid {
    width: 100%;
    height: calc(100% + 2px);
    table-layout: fixed;
    border-spacing: 0;
    white-space: nowrap;
    background: #efefef;
  }

  .c-gutter {
    width: 30px;
  }

  .c-icon {
    width: 24px;
  }

  .c-name {
    width: 250px;
  }

  .c-table {
    width: 249px;
  }

  .c-type {
    width: 163px;
  }

  .c-conn {
    width: 125px;
  }

  .c-plc {
    width: 250px;
  }

  .grid th {
    height: 25px;
    box-sizing: border-box;
    padding: 0 0 0 5px;
    border-top: 2px solid #c4c4c4;
    border-right: 1px solid #b0b0b0;
    background: linear-gradient(#f6f8fa, #d6dce2);
    font-size: 16px;
    font-weight: 400;
    text-align: left;
  }

  .grid th:first-child {
    background: linear-gradient(#e0e0e0, #c8c8c8);
  }

  .grid small {
    font-size: 15px;
  }

  .sort {
    width: 10px;
    height: 6px;
    margin-left: 12px;
  }

  .grid tbody tr {
    height: 23px;
  }

  .grid td {
    height: 23px;
    box-sizing: border-box;
    padding: 0 0 0 5px;
    border-right: 1px solid #fff;
    border-bottom: 1px solid #fff;
    overflow: hidden;
  }

  .grid td:first-child {
    background: #cbcbcb;
  }

  .grid .current td {
    border-bottom: 0;
    background: linear-gradient(#e8eefa 2px, #3f6fd0 2px, #3f6fd0 3px, #c0cce8 3px, #c0cce8 calc(100% - 1px), #3f6fd0 0);
  }

  .grid .current td:first-child {
    background: #c2ccd4;
  }

  .grid .current .tag-cell {
    padding-left: 2px;
    background: linear-gradient(#e8eefa 2px, #3f6fd0 2px, #3f6fd0 3px, #efefef 3px, #efefef calc(100% - 1px), #3f6fd0 0);
  }

  .grid .tag-name {
    padding-left: 29px;
  }

  .cell {
    height: 20px;
    display: flex;
    align-items: center;
    justify-content: space-between;
  }

  .cell select {
    flex: 1;
    appearance: none;
  }

  .app .cell-btn {
    width: 22px;
    height: 20px;
    box-sizing: border-box;
    border: 1px solid #8a8a8a;
    background: linear-gradient(#f2f2f2, #cacaca);
    display: grid;
    place-items: center;
    flex-shrink: 0;
    overflow: hidden;
  }

  .cell-btn svg {
    width: 10px;
    height: 10px;
    fill: #0c0c90;
  }

  .cell-btn .icon {
    width: 18px;
    height: 18px;
    fill: none;
  }

  .app .dots {
    line-height: 14px;
  }

  .app .edge {
    width: 12px;
  }

  .undef {
    color: #8a8a8a;
  }

  .hscroll {
    height: 23px;
    flex-shrink: 0;
    display: flex;
    padding-left: 30px;
    background: linear-gradient(90deg, #cbcbcb 30px, #c2c2c2 30px);
    border-bottom: 1px solid #999;
  }

  .app .hscroll .right {
    width: 20px;
    border-right: 0;
  }

  .track {
    flex: 1;
    display: flex;
    padding-left: 2px;
  }

  .hthumb {
    width: 78%;
    height: 22px;
    box-sizing: border-box;
    border: 1px solid #888;
    background: linear-gradient(#eee, #d6d6d6);
    display: flex;
    align-items: center;
    justify-content: center;
    gap: 2px;
  }

  .hthumb i {
    width: 1px;
    height: 11px;
    background: #555;
  }

  .splitter {
    height: 6px;
    flex-shrink: 0;
    display: flex;
    justify-content: center;
    gap: 13px;
    border-bottom: 1px solid #fff;
    background: #d9d9d9;
  }

  .app .splitter button {
    width: 30px;
    border: 1px solid #999;
    border-width: 0 1px;
    display: grid;
    place-items: center;
    fill: #888;
  }

  .app .splitter .up {
    background: #b8b8b8;
    fill: #000;
  }

  .splitter svg {
    width: 8px;
    height: 5px;
    display: block;
  }

  .params {
    height: 24px;
    flex-shrink: 0;
    border-bottom: 4px solid #1f2434;
    color: #fff;
    font-weight: 600;
    line-height: 24px;
    text-align: center;
  }

  .params b {
    font-size: 16px;
  }

  .inspector {
    position: relative;
    height: 19px;
    flex-shrink: 0;
    display: flex;
    justify-content: flex-end;
    gap: 2px;
    padding: 4px 4px 0 0;
    overflow: hidden;
  }

  .app .itab {
    width: 94px;
    height: 26px;
    box-sizing: border-box;
    padding-left: 2px;
    border: 1px solid #888;
    background: linear-gradient(#d8d8d8, #c4c4c4);
    display: flex;
    align-items: center;
    gap: 4px;
    color: #666;
    font-size: 18px;
    font-weight: 700;
  }

  .app .itab.on {
    width: 101px;
    border-color: #fff;
    background: #eaeaea;
    color: #111;
  }

  .badge {
    width: 16px;
    height: 16px;
    margin-left: 10px;
    border-radius: 50%;
    background: #f8d820;
    box-shadow: 0 0 0 1px #b08c10;
    font: 700 14px/16px "Liberation Serif", serif;
    text-align: center;
  }

  .inspector-icons {
    display: flex;
    gap: 9px;
    padding: 5px 0 0 22px;
    fill: #fff;
  }

  .watermark {
    position: absolute;
    right: 15px;
    top: -2px;
    color: #ececec;
    font: 15px/18px "Liberation Sans", sans-serif;
    text-shadow: 1px 1px 1px #666;
  }
</style>
